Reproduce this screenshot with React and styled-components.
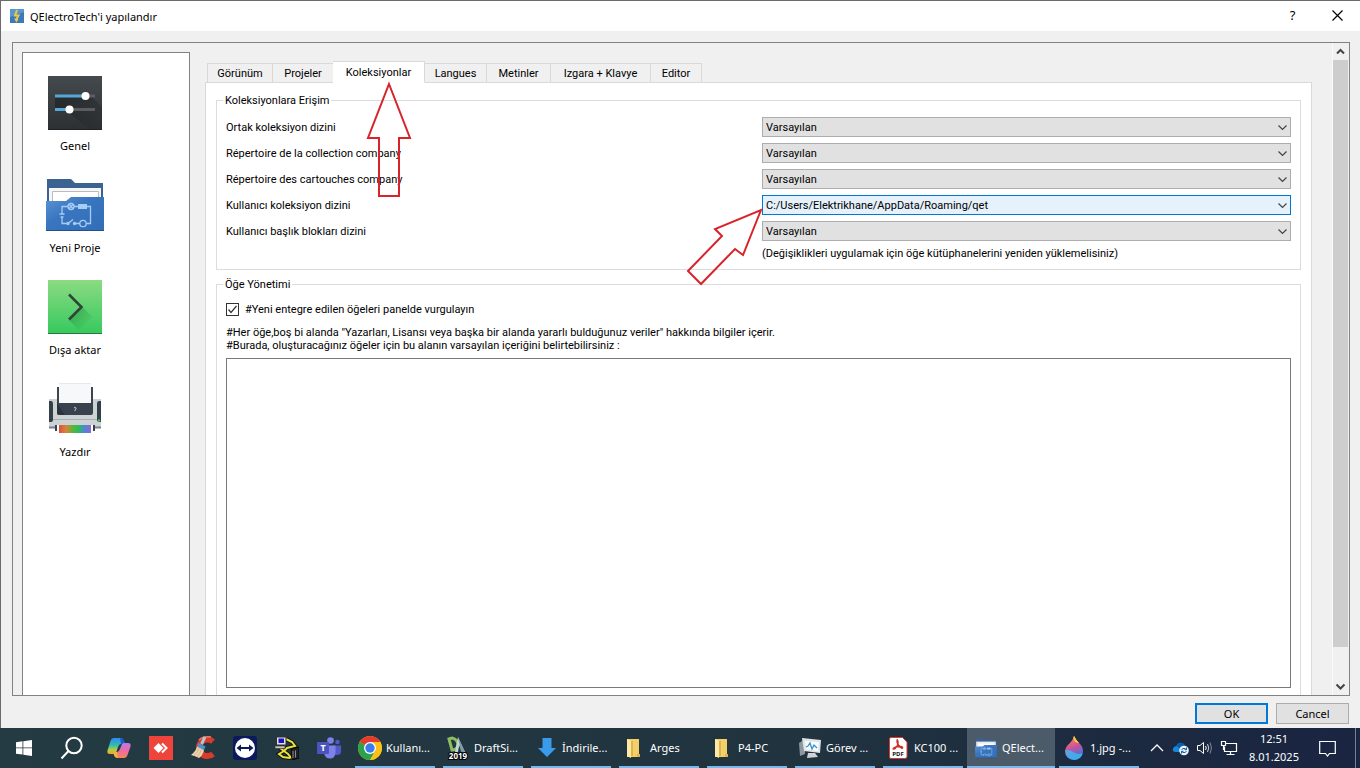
import React, { useState } from "react";
import styled, { createGlobalStyle } from "styled-components";

const GlobalStyle = createGlobalStyle`
    * {
        box-sizing: border-box;
    }
    body {
        margin: 0;
        font-family: "Noto Sans", "Open Sans", sans-serif;
        font-size: 11px;
        line-height: 13px;
        color: #000;
    }
    button, select, textarea, input {
        font: inherit;
        color: inherit;
        margin: 0;
    }
`
const Desktop = styled.div`
    position: relative;
    display: flex;
    flex-direction: column;
    height: 100vh;
    overflow: hidden;
`
const Window = styled.main`
    flex: 1;
    min-height: 0;
    display: flex;
    flex-direction: column;
    background: #f0f0f0;
    border-top: 1px solid #6b6b6b;
    border-left: 1px solid #6b6b6b;
`
const TitleBar = styled.header`
    display: flex;
    align-items: center;
    height: 30px;
    padding-left: 9px;
    background: #fff;
`
const Title = styled.h1`
    flex: 1;
    margin: 0 0 0 6px;
    font-size: 11px;
    font-weight: 400;
`
const TitleButton = styled.button`
    display: flex;
    align-items: center;
    justify-content: center;
    width: 45px;
    height: 30px;
    padding: 0 0 2px;
    border: 0;
    background: none;
    font-size: 13px;
`
const Viewport = styled.div`
    flex: 1;
    min-height: 0;
    display: flex;
    margin: 11px 10px 0 11px;
    border: 1px solid #828282;
`
const Sidebar = styled.nav`
    width: 168px;
    margin: 9px 0 0 9px;
    padding-top: 18px;
    background: #fff;
    border: 1px solid #828282;
    border-bottom: 0;
`
const SidebarItem = styled.button`
    display: flex;
    flex-direction: column;
    align-items: center;
    width: 104px;
    height: 102px;
    padding: 0;
    border: 0;
    background: none;
    line-height: 22px;
`
const Content = styled.div`
    flex: 1;
    min-width: 0;
    display: flex;
    flex-direction: column;
    padding: 18px 20px 0 15px;
    font-family: Roboto, "Noto Sans", sans-serif;
`
const Tabs = styled.div`
    display: flex;
    align-items: flex-end;
    height: 22px;
    padding-left: 2px;
    margin-bottom: -1px;
    z-index: 1;
`
const Tab = styled.button`
    width: ${props => props.$width}px;
    height: ${props => props.$active ? 22 : 20}px;
    margin-left: ${props => props.$active ? -1 : 0}px;
    padding: 0;
    background: ${props => props.$active ? "#fff" : "#f0f0f0"};
    border: 1px solid #d9d9d9;
    border-bottom-color: ${props => props.$active ? "#fff" : "#d9d9d9"};
    & + & {
        border-left-width: ${props => props.$active ? 1 : 0}px;
    }
`
const Page = styled.section`
    flex: 1;
    min-height: 0;
    display: flex;
    flex-direction: column;
    gap: 8px;
    padding: 11px 10px 0;
    background: #fff;
    border: 1px solid #d9d9d9;
    border-bottom: 0;
`
const Group = styled.fieldset`
    min-width: 0;
    margin: 0;
    padding: 0 6px;
    border: 1px solid #dcdcdc;
    ${props => props.$grow && `
        flex: 1;
        min-height: 0;
        border-bottom: 0;
    `}
`
const Legend = styled.legend`
    padding: 0 2px;
`
const Form = styled.div`
    display: grid;
    grid-template-columns: 1fr 1fr;
    gap: 6px 7px;
    align-items: center;
    padding: 10px 3px 9px;
`
const Hint = styled.span`
    grid-column: 2;
`
const SelectBox = styled.div`
    position: relative;
    display: flex;
    height: 20px;
    svg {
        position: absolute;
        right: 3px;
        top: 5px;
        pointer-events: none;
    }
`
const Select = styled.select`
    flex: 1;
    appearance: none;
    padding: 0 20px 0 3px;
    border: 1px solid ${props => props.$hot ? "#0078d7" : "#adadad"};
    border-radius: 0;
    background: ${props => props.$hot ? "#e5f1fb" : "#e1e1e1"};
`
const Column = styled.div`
    display: flex;
    flex-direction: column;
    height: 100%;
    padding: 12px 3px 7px;
`
const CheckLabel = styled.label`
    display: flex;
    align-items: center;
    gap: 6px;
`
const Checkbox = styled.input`
    appearance: none;
    width: 13px;
    height: 13px;
    border: 1px solid #333;
    background: #fff;
`
const CheckBoxWrap = styled.span`
    position: relative;
    display: flex;
    svg {
        position: absolute;
        left: 0;
        top: 0;
        pointer-events: none;
    }
`
const AreaLabel = styled.label`
    margin: 10px 0 6px;
`
const TextArea = styled.textarea`
    flex: 1;
    resize: none;
    border: 1px solid #7a7a7a;
    border-radius: 0;
    background: #fff;
    outline: none;
`
const ScrollBar = styled.div`
    display: flex;
    flex-direction: column;
    width: 17px;
    padding-right: 1px;
    border-left: 1px solid #fafafa;
`
const ScrollButton = styled.button`
    display: flex;
    align-items: center;
    justify-content: center;
    height: 17px;
    padding: 0;
    border: 0;
    background: none;
`
const ScrollTrack = styled.div`
    flex: 1;
    display: flex;
`
const ScrollThumb = styled.div`
    flex: 1;
    height: 95%;
    background: #cdcdcd;
`
const Footer = styled.footer`
    display: flex;
    justify-content: flex-end;
    gap: 8px;
    padding: 7px 11px 4px;
`
const DialogButton = styled.button`
    width: 73px;
    height: 21px;
    padding: 0;
    border: ${props => props.$primary ? "2px solid #0078d7" : "1px solid #adadad"};
    background: #e1e1e1;
`
const TaskBar = styled.footer`
    display: flex;
    height: 40px;
    color: #fff;
    background: linear-gradient(90deg, #243b43 0%, #20333f 60%, #1c2a40 82%, #1a2542 100%);
`
const Launcher = styled.button`
    display: flex;
    align-items: center;
    justify-content: center;
    width: ${props => props.$wide ? 48 : 42}px;
    padding: 0;
    border: 0;
    background: none;
`
const Launchers = styled.div`
    display: flex;
    padding: 0 1px 0 2px;
`
const Tasks = styled.div`
    display: flex;
`
const Task = styled.button`
    display: flex;
    align-items: center;
    gap: 4px;
    width: 88px;
    padding: 0 0 1px 7px;
    border: 0;
    white-space: nowrap;
    background:
        linear-gradient(#76b9ed, #76b9ed) bottom / ${props => props.$active ? "100%" : "80px"} 2px no-repeat,
        ${props => props.$active ? "#4b5b69" : "transparent"};
`
const Tray = styled.div`
    display: flex;
    align-items: center;
    margin-left: auto;
`
const TrayButton = styled.button`
    display: flex;
    align-items: center;
    justify-content: center;
    width: 24px;
    height: 40px;
    padding: 0;
    border: 0;
    background: none;
`
const Clock = styled.time`
    width: 66px;
    line-height: 18px;
    text-align: center;
`
const Notifications = styled(TrayButton)`
    width: 40px;
`
const ShowDesktop = styled(TrayButton)`
    width: 5px;
    margin-left: 8px;
    border-left: 1px solid #76808f;
`
const Markers = styled.svg`
    position: absolute;
    left: 0;
    top: 0;
    pointer-events: none;
    z-index: 2;
`

const Chevron = ({ flip, bold }) => (
    <svg width="11" height="11" viewBox="0 0 11 11">
        <path d={flip ? "M2 7.5L5.5 4L9 7.5" : "M1.5 3.5L5.5 7.5L9.5 3.5"} fill="none" stroke="#444" strokeWidth={bold ? 2 : 1.2} />
    </svg>
)

const AppLogo = () => (
    <svg width="14" height="14" viewBox="0 0 14 14">
        <rect width="14" height="14" fill="#5a95d4" />
        <path d="M0 14V8L14 3V14Z" fill="#3d78ba" />
        <path d="M7 1L5 6.500H8.500L6 11" fill="none" stroke="#e8cb45" strokeWidth="2" />
        <path d="M4 9.500L6.500 13.500L8.500 10Z" fill="#e8cb45" />
    </svg>
)

const SettingsIcon = () => (
    <svg width="64" height="64" viewBox="0 0 64 64">
        <defs>
            <linearGradient id="dark" x1="0" y1="0" x2="0" y2="1">
                <stop offset="0" stopColor="#454a4e" />
                <stop offset="1" stopColor="#2c3033" />
            </linearGradient>
            <linearGradient id="darkShade" x1="0" y1="0" x2="1" y2="1">
                <stop offset=".2" stopColor="#16181a" stopOpacity=".5" />
                <stop offset="1" stopColor="#16181a" stopOpacity="0" />
            </linearGradient>
        </defs>
        <rect x="5" y="5" width="54" height="54" fill="url(#dark)" />
        <path d="M45 22L59 36V59H48L24 41L12 39V26L42 26Z" fill="url(#darkShade)" />
        <path d="M42 25H52M27 38.500H52" stroke="#5b5c60" strokeWidth="3" />
        <path d="M12 25H42M12 38.500H26" stroke="#54a8d8" strokeWidth="3" />
        <circle cx="42.500" cy="25" r="4" fill="#fff" />
        <circle cx="26.500" cy="38.500" r="4" fill="#fff" />
        <path d="M5 58.500H59" stroke="#1f2123" />
    </svg>
)

const ProjectIcon = ({ size = 64 }) => (
    <svg width={size} height={size} viewBox="0 0 64 64">
        <defs>
            <linearGradient id="folder" x1="0" y1="0" x2="1" y2="1">
                <stop offset="0" stopColor="#5b94d6" />
                <stop offset=".4" stopColor="#3a76bf" />
                <stop offset="1" stopColor="#326db8" />
            </linearGradient>
        </defs>
        <path d="M4 6H28L32 10H60V34H4Z" fill="#3c6291" />
        <path d="M6 15H58V36H6Z" fill="#f6f6f6" />
        <path d="M9.500 34V18.500H55.500V34" fill="#fff" stroke="#bcbcbc" />
        <path d="M3 28H23L28 24H61V58H3Z" fill="url(#folder)" />
        <path d="M3 57.500H61" stroke="#234f8c" />
        <g fill="none" stroke="#a5cdf5" strokeWidth="1.300">
            <path d="M19 41V33.500H25M31 33.500H35M44 33.500H47.500V50.500H43M19 44V50.500H24M16.500 41H21.500M17.500 44H20.500" />
            <circle cx="28" cy="33.500" r="3" />
            <path d="M26 31.500L30 35.500M30 31.500L26 35.500" />
            <circle cx="40" cy="50.500" r="3.200" />
            <path d="M25 50.500L30 46.500M31 50.500H37" />
            <circle cx="25" cy="50.500" r="1" />
            <circle cx="31.500" cy="50.500" r="1" />
        </g>
        <rect x="35" y="31" width="9" height="5" fill="#a5cdf5" />
    </svg>
)

const ExportIcon = () => (
    <svg width="64" height="64" viewBox="0 0 64 64">
        <defs>
            <linearGradient id="green" x1="0" y1="0" x2="0" y2="1">
                <stop offset="0" stopColor="#8bdb82" />
                <stop offset="1" stopColor="#36c95e" />
            </linearGradient>
            <linearGradient id="greenShade" x1="0" y1="0" x2="1" y2="1">
                <stop offset=".2" stopColor="#1f8a3c" stopOpacity=".5" />
                <stop offset=".8" stopColor="#1f8a3c" stopOpacity="0" />
            </linearGradient>
        </defs>
        <rect x="5" y="5" width="54" height="54" fill="url(#green)" />
        <path d="M39 32L26 45L36 55L50 42Z" fill="url(#greenShade)" />
        <path d="M26 19.500L38.500 32L26 44.500" fill="none" stroke="#2f4439" strokeWidth="2.500" />
        <path d="M5 58.500H59" stroke="#267a3c" />
    </svg>
)

const PrintIcon = () => (
    <svg width="64" height="64" viewBox="0 0 64 64">
        <defs>
            <linearGradient id="rainbow">
                <stop offset="0" stopColor="#d9503c" />
                <stop offset=".22" stopColor="#d9853a" />
                <stop offset=".45" stopColor="#4fb83c" />
                <stop offset=".62" stopColor="#2fb95a" />
                <stop offset=".8" stopColor="#4a86d8" />
                <stop offset="1" stopColor="#9168cc" />
            </linearGradient>
        </defs>
        <rect x="14" y="10" width="36" height="20" fill="#3a4550" />
        <path d="M6 22H14V26H50V22H58V50H6Z" fill="#cdd3d4" />
        <rect x="16" y="6" width="32" height="22" fill="#f7f8f9" />
        <path d="M16 6.500H48" stroke="#e6e8e9" />
        <path d="M6 24H8Q10 24 10 27V43Q10 45 7 45H6ZM58 24H56Q54 24 54 27V43Q54 45 57 45H58Z" fill="#353f49" />
        <path d="M14 26H50V36Q50 38 48 38H16Q14 38 14 36Z" fill="#37424e" />
        <path d="M14 26L22 38H16Q14 38 14 36Z" fill="#222c36" opacity=".6" />
        <path d="M31 31C33 29 34 32 31.500 34" fill="none" stroke="#c5cdd2" />
        <circle cx="56" cy="43.500" r="1.200" fill="#3ad25c" />
        <path d="M10 42.500H54" stroke="#a7afb2" />
        <path d="M6 50.500H14M50 50.500H58" stroke="#77838c" strokeWidth="2" />
        <path d="M13 48V54M51 48V54" stroke="#37424e" strokeWidth="2" />
        <rect x="14" y="48" width="36" height="8" fill="#fff" />
        <rect x="16" y="48" width="32" height="8" fill="url(#rainbow)" />
    </svg>
)

const StartIcon = () => (
    <svg width="16" height="16" viewBox="0 0 16 16" fill="#fff">
        <path d="M0 2.200L6.500 1.300V7.500H0ZM7.300 1.200L16 0V7.500H7.300ZM0 8.300H6.500V14.600L0 13.700ZM7.300 8.300H16V16L7.300 14.700Z" />
    </svg>
)

const SearchIcon = () => (
    <svg width="24" height="24" viewBox="0 0 24 24" fill="none" stroke="#fff" strokeWidth="2">
        <circle cx="14" cy="9.500" r="7.700" />
        <path d="M8.500 15L1.500 22.500" />
    </svg>
)

const CopilotIcon = () => (
    <svg width="24" height="24" viewBox="0 0 24 24">
        <defs>
            <linearGradient id="copA" x1="0" y1="0" x2="0" y2="1">
                <stop offset="0" stopColor="#2a8df0" />
                <stop offset=".45" stopColor="#35b9b0" />
                <stop offset=".75" stopColor="#b6cf3e" />
                <stop offset="1" stopColor="#f0a928" />
            </linearGradient>
            <linearGradient id="copB" x1="0" y1="0" x2="0" y2="1">
                <stop offset="0" stopColor="#b57bea" />
                <stop offset=".5" stopColor="#ee6aa6" />
                <stop offset="1" stopColor="#f48a52" />
            </linearGradient>
        </defs>
        <path d="M7 2H14Q16 2 17 5L18 8H14Q12 8 11 11L9 17Q8 18 6 18H3Q-1 18 1 13L3.500 5Q4.500 2 7 2Z" fill="url(#copA)" />
        <path d="M13 2Q16 2 17 5L18 8H14Z" fill="#1d5bd0" />
        <path d="M17 22H10Q8 22 7 19L6 16H10Q12 16 13 13L15 8Q16 7 18 7H21Q25 7 23 12L20.500 19Q19.500 22 17 22Z" fill="url(#copB)" />
        <path d="M11 22Q8 22 7 19L6 16H10Z" fill="#f4b13c" />
    </svg>
)

const AnyDeskIcon = () => (
    <svg width="24" height="24" viewBox="0 0 24 24">
        <rect width="24" height="24" fill="#ef443b" />
        <path d="M4.500 12L9.500 7L14.500 12L9.500 17Z" fill="#fff" />
        <path d="M13 7.500L17.500 12L13 16.500" fill="none" stroke="#fff" strokeWidth="2" />
    </svg>
)

const CleanerIcon = () => (
    <svg width="24" height="24" viewBox="0 0 24 24">
        <path d="M22 5.500Q19 3 15 3.500Q8 5 8 12Q9 19 15 20Q19 20.500 22 18" fill="none" stroke="#d83a2c" strokeWidth="6" />
        <path d="M8 4Q12 0 20 1" fill="none" stroke="#ef7b62" strokeWidth="1.500" />
        <path d="M14 1L10.500 8" stroke="#b9c3cb" strokeWidth="3" />
        <path d="M7.500 7L14.500 10.500L13 14L6 10.500Z" fill="#4a93d0" />
        <path d="M6 10.500L13 14Q12 19 8 22Q4 20 0 19Q5 15 6 10.500Z" fill="#ecd3ab" />
        <path d="M8 12Q7 17 3 19.500M10.500 13Q9 18 6 21" fill="none" stroke="#c9a878" strokeWidth=".7" />
    </svg>
)

const TeamViewerIcon = () => (
    <svg width="24" height="24" viewBox="0 0 24 24">
        <rect width="24" height="24" rx="3" fill="#0b1a5c" />
        <circle cx="12" cy="12" r="10" fill="#fff" />
        <path d="M3.500 12L8 8.500V11H16V8.500L20.500 12L16 15.500V13H8V15.500Z" fill="#0b1a5c" />
    </svg>
)

const CableIcon = () => (
    <svg width="24" height="24" viewBox="0 0 24 24">
        <path d="M11 3L17 6L20 10L12 12L9 15L13 18L17 23M5 12L9 15L4 18L8 21L15 22" fill="none" stroke="#111" strokeWidth="4" />
        <path d="M11 3L17 6L20 10L12 12L9 15L13 18L17 23M5 12L9 15L4 18L8 21L15 22" fill="none" stroke="#e8e23a" strokeWidth="2" />
        <path d="M1.500 1H11V9H1.500Z" fill="#e2e2e2" stroke="#333" />
        <rect x="3.500" y="2.500" width="5.500" height="4.500" fill="#1616c8" />
        <path d="M0 10H10V12.500H0Z" fill="#c8c8c8" stroke="#333" strokeWidth=".7" />
        <path d="M16 13L24 11V22L17 24Z" fill="#222" stroke="#050505" />
        <path d="M18 15V22M20.500 14.500V21.500" stroke="#8a8a8a" />
    </svg>
)

const TeamsIcon = () => (
    <svg width="24" height="24" viewBox="0 0 24 24">
        <circle cx="20.500" cy="6" r="2.300" fill="#5059c9" />
        <path d="M16 9.500H24V15.500Q24 19 20 19Q16 19 16 15.500Z" fill="#5059c9" />
        <circle cx="13.500" cy="4.500" r="3.300" fill="#7b83eb" />
        <path d="M7 9.500H18.500V17Q18 22.500 13 22.500Q8 22.500 7 17Z" fill="#7b83eb" />
        <rect y="6" width="12" height="12" rx="1" fill="#4b53bc" />
        <text x="6" y="15" fontSize="9" fontWeight="700" textAnchor="middle" fill="#fff">T</text>
    </svg>
)

const ChromeIcon = () => (
    <svg width="24" height="24" viewBox="0 0 24 24">
        <circle cx="12" cy="12" r="12" fill="#fbc116" />
        <path d="M12 12L1.610 6A12 12 0 0 1 22.390 6Z" fill="#e33b2e" />
        <path d="M12 12L1.610 6A12 12 0 0 0 12 24L17.200 15Z" fill="#2ba24c" />
        <path d="M12 6H22.390A12 12 0 0 1 12 24L17.200 15Z" fill="#fbc116" />
        <circle cx="12" cy="12" r="6" fill="#fff" />
        <circle cx="12" cy="12" r="4.700" fill="#3a7bee" />
    </svg>
)

const DraftIcon = () => (
    <svg width="24" height="24" viewBox="0 0 24 24">
        <path d="M3 3L6 2Q11 3 12 8Q12 13 7 14L6 14Z" fill="none" stroke="#8ebd5e" strokeWidth="3" />
        <path d="M9 16L12 1L19 16H16L13 9L12 16Z" fill="#c4d8da" />
        <path d="M12 1L19 16H15Z" fill="#7d9ba3" />
        <text x="12" y="23" fontSize="8" fontWeight="700" textAnchor="middle" fill="#fff" stroke="#000" strokeWidth="2" paintOrder="stroke">2019</text>
    </svg>
)

const DownloadIcon = () => (
    <svg width="24" height="24" viewBox="0 0 24 24">
        <path d="M8.500 2H17.500V12H22L13 21L4 12H8.500Z" fill="#3a9bea" />
    </svg>
)

const FolderIcon = () => (
    <svg width="24" height="24" viewBox="0 0 24 24">
        <path d="M5 3H17V21H5Z" fill="#f3cf6b" />
        <path d="M5 3L9 5V22L5 20Z" fill="#ffe9a4" />
        <path d="M9 5H11V20H9ZM15 18H18V21H15Z" fill="#dfb346" />
    </svg>
)

const TaskManagerIcon = () => (
    <svg width="24" height="24" viewBox="0 0 24 24">
        <path d="M1 7L7 3V18L2 20Z" fill="#8d979c" />
        <path d="M4 2L23 4L22 17L6 15Z" fill="#dfe4e6" />
        <path d="M7 5L21 6L20 15L8 13.500Z" fill="#f6fbff" />
        <path d="M8 11L10 10L12 7L14 13L16 9L19 12" fill="none" stroke="#3f8fc4" strokeWidth="1.300" />
        <path d="M10 17L17 17L20 21L9 22Z" fill="#cdd3d6" />
    </svg>
)

const PdfIcon = () => (
    <svg width="24" height="24" viewBox="0 0 24 24">
        <path d="M5 1.500H16.500L21 6V20.500Q21 22.500 19 22.500H5Q3.500 22.500 3.500 21V3Q3.500 1.500 5 1.500Z" fill="#fff" stroke="#d63c32" />
        <path d="M11.500 4Q13 7 11 10Q9 14 7 13Q8 10.500 14 10.500Q18 11 16 12.500Q12 10 11 6Q11 3 11.500 4" fill="none" stroke="#d52b22" strokeWidth="1.300" />
        <text x="12" y="20" fontSize="6" fontWeight="700" textAnchor="middle" fill="#111">PDF</text>
    </svg>
)

const PaintIcon = () => (
    <svg width="24" height="24" viewBox="0 0 24 24">
        <defs>
            <linearGradient id="drop" x1="0" y1="0" x2=".3" y2="1">
                <stop offset=".1" stopColor="#f7c646" />
                <stop offset=".3" stopColor="#ee6a72" />
                <stop offset=".6" stopColor="#c052a5" />
                <stop offset="1" stopColor="#2f7fe0" />
            </linearGradient>
        </defs>
        <path d="M12 0Q14 4 18 8Q21 11 21 15.500A9 8.500 0 0 1 3 15.500Q3 11 8 7Q11 4 12 0Z" fill="url(#drop)" />
        <path d="M11.500 1.500L12 0Q14 4 17 7Q12 7 11.500 1.500Z" fill="#f9cf3c" />
        <path d="M3.200 14Q8 13 12 16.500Q16 19 20.500 17Q19 24 12 24Q3 23 3.200 14Z" fill="#46b5ee" opacity=".8" />
    </svg>
)

const CloudIcon = () => (
    <svg width="18" height="16" viewBox="0 0 18 16">
        <path d="M4 12Q0 12 1 8.500Q2 6 4.500 6Q6 2 10 3Q12.500 4 13 6Q16 6.500 16 9L14 12Z" fill="#1886da" />
        <path d="M4.500 6Q6 2 10 3Q12.500 4 13 6L8 9Z" fill="#0c5fae" />
        <circle cx="12" cy="10.500" r="4.800" fill="#eaf3fb" />
        <path d="M9.500 9.500Q12 7 14.500 9.500M14.500 11.500Q12 14 9.500 11.500M14.500 7.500V9.700H12.500M9.500 13.500V11.300H11.500" fill="none" stroke="#0c5fae" />
    </svg>
)

const VolumeIcon = () => (
    <svg width="18" height="16" viewBox="0 0 18 16" fill="none" stroke="#fff">
        <path d="M1.500 5.500H4L7.500 2.500V13.500L4 10.500H1.500Z" />
        <path d="M9.500 6Q11 8 9.500 10" />
        <path d="M11.500 4Q14 8 11.500 12" opacity=".8" />
        <path d="M14 2.500Q17 8 14 13.500" opacity=".45" />
    </svg>
)

const NetworkIcon = () => (
    <svg width="18" height="16" viewBox="0 0 18 16" fill="none" stroke="#fff" strokeWidth="1.200">
        <path d="M5.500 3.500H16.500V11.500H4.500V6.500M10.500 11.500V14M6.500 14.500H14.500" />
        <path d="M1.500 1.500H5.500V5.500H1.500ZM3.500 5.500V10" />
    </svg>
)

const sections = [
    { name: "Genel", icon: <SettingsIcon /> },
    { name: "Yeni Proje", icon: <ProjectIcon /> },
    { name: "Dışa aktar", icon: <ExportIcon /> },
    { name: "Yazdır", icon: <PrintIcon /> }
]

const tabs = [
    { name: "Görünüm", width: 66 },
    { name: "Projeler", width: 61 },
    { name: "Koleksiyonlar", width: 92 },
    { name: "Langues", width: 62 },
    { name: "Metinler", width: 64 },
    { name: "Izgara + Klavye", width: 100 },
    { name: "Editor", width: 51 }
]

const folders = [
    { id: "common", label: "Ortak koleksiyon dizini", value: "Varsayılan" },
    { id: "company", label: "Répertoire de la collection company", value: "Varsayılan" },
    { id: "companyTb", label: "Répertoire des cartouches company", value: "Varsayılan" },
    { id: "user", label: "Kullanıcı koleksiyon dizini", value: "C:/Users/Elektrikhane/AppData/Roaming/qet", hot: true },
    { id: "userTb", label: "Kullanıcı başlık blokları dizini", value: "Varsayılan" }
]

const launchers = [
    { name: "Copilot", icon: <CopilotIcon /> },
    { name: "AnyDesk", icon: <AnyDeskIcon /> },
    { name: "CCleaner", icon: <CleanerIcon /> },
    { name: "TeamViewer", icon: <TeamViewerIcon /> },
    { name: "PLC", icon: <CableIcon /> },
    { name: "Teams", icon: <TeamsIcon /> }
]

const tasks = [
    { name: "Kullanı...", icon: <ChromeIcon /> },
    { name: "DraftSi...", icon: <DraftIcon /> },
    { name: "İndirile...", icon: <DownloadIcon /> },
    { name: "Arges", icon: <FolderIcon /> },
    { name: "P4-PC", icon: <FolderIcon /> },
    { name: "Görev ...", icon: <TaskManagerIcon /> },
    { name: "KC100 ...", icon: <PdfIcon /> },
    { name: "QElect...", icon: <ProjectIcon size={24} />, active: true },
    { name: "1.jpg -...", icon: <PaintIcon /> }
]

export default function App() {
    const [tab, setTab] = useState("Koleksiyonlar")
    const [highlight, setHighlight] = useState(true)

    return (
        <Desktop>
            <GlobalStyle />
            <Window>
                <TitleBar>
                    <AppLogo />
                    <Title>QElectroTech'i yapılandır</Title>
                    <TitleButton>?</TitleButton>
                    <TitleButton aria-label="Close">
                        <svg width="11" height="11" viewBox="0 0 11 11">
                            <path d="M.5 .5L10.500 10.500M10.500 .5L.5 10.500" stroke="#000" strokeWidth="1.200" />
                        </svg>
                    </TitleButton>
                </TitleBar>
                <Viewport>
                    <Sidebar>
                        {sections.map(section => (
                            <SidebarItem key={section.name}>
                                {section.icon}
                                {section.name}
                            </SidebarItem>
                        ))}
                    </Sidebar>
                    <Content>
                        <Tabs role="tablist">
                            {tabs.map(({ name, width }) => (
                                <Tab
                                    key={name}
                                    role="tab"
                                    aria-selected={tab === name}
                                    $active={tab === name}
                                    $width={width}
                                    onClick={() => setTab(name)}
                                >
                                    {name}
                                </Tab>
                            ))}
                        </Tabs>
                        <Page>
                            <Group>
                                <Legend>Koleksiyonlara Erişim</Legend>
                                <Form>
                                    {folders.map(folder => (
                                        <React.Fragment key={folder.id}>
                                            <label htmlFor={folder.id}>{folder.label}</label>
                                            <SelectBox>
                                                <Select id={folder.id} $hot={folder.hot} defaultValue={folder.value}>
                                                    <option>{folder.value}</option>
                                                </Select>
                                                <Chevron />
                                            </SelectBox>
                                        </React.Fragment>
                                    ))}
                                    <Hint>(Değişiklikleri uygulamak için öğe kütüphanelerini yeniden yüklemelisiniz)</Hint>
                                </Form>
                            </Group>
                            <Group $grow>
                                <Legend>Öğe Yönetimi</Legend>
                                <Column>
                                    <CheckLabel>
                                        <CheckBoxWrap>
                                            <Checkbox
                                                type="checkbox"
                                                checked={highlight}
                                                onChange={e => setHighlight(e.target.checked)}
                                            />
                                            {highlight && (
                                                <svg width="13" height="13" viewBox="0 0 13 13">
                                                    <path d="M2.500 6.500L5 9.500L10.500 3" fill="none" stroke="#333" strokeWidth="1.200" />
                                                </svg>
                                            )}
                                        </CheckBoxWrap>
                                        #Yeni entegre edilen öğeleri panelde vurgulayın
                                    </CheckLabel>
                                    <AreaLabel htmlFor="defaultInfo">
                                        #Her öğe,boş bi alanda "Yazarları, Lisansı veya başka bir alanda yararlı bulduğunuz veriler" hakkında bilgiler içerir.
                                        <br />
                                        #Burada, oluşturacağınız öğeler için bu alanın varsayılan içeriğini belirtebilirsiniz :
                                    </AreaLabel>
                                    <TextArea id="defaultInfo" />
                                </Column>
                            </Group>
                        </Page>
                    </Content>
                    <ScrollBar>
                        <ScrollButton aria-label="Scroll up"><Chevron flip bold /></ScrollButton>
                        <ScrollTrack><ScrollThumb /></ScrollTrack>
                        <ScrollButton aria-label="Scroll down"><Chevron bold /></ScrollButton>
                    </ScrollBar>
                </Viewport>
                <Footer>
                    <DialogButton $primary>OK</DialogButton>
                    <DialogButton>Cancel</DialogButton>
                </Footer>
            </Window>
            <TaskBar>
                <Launcher $wide aria-label="Start"><StartIcon /></Launcher>
                <Launcher $wide aria-label="Search"><SearchIcon /></Launcher>
                <Launchers>
                    {launchers.map(({ name, icon }) => (
                        <Launcher key={name} aria-label={name}>{icon}</Launcher>
                    ))}
                </Launchers>
                <Tasks>
                    {tasks.map(task => (
                        <Task key={task.name} $active={task.active}>
                            {task.icon}
                            {task.name}
                        </Task>
                    ))}
                </Tasks>
                <Tray>
                    <TrayButton aria-label="Hidden icons">
                        <svg width="14" height="8" viewBox="0 0 14 8">
                            <path d="M1 7L7 1L13 7" fill="none" stroke="#fff" strokeWidth="1.300" />
                        </svg>
                    </TrayButton>
                    <TrayButton aria-label="OneDrive"><CloudIcon /></TrayButton>
                    <TrayButton aria-label="Volume"><VolumeIcon /></TrayButton>
                    <TrayButton aria-label="Network"><NetworkIcon /></TrayButton>
                    <Clock>
                        12:51
                        <br />
                        8.01.2025
                    </Clock>
                    <Notifications aria-label="Notifications">
                        <svg width="17" height="17" viewBox="0 0 17 17">
                            <path d="M.7 1.500H16.300V13.500H10.500L8.500 16L6.500 13.500H.7Z" fill="none" stroke="#fff" strokeWidth="1.200" />
                        </svg>
                    </Notifications>
                    <ShowDesktop aria-label="Show desktop" />
                </Tray>
            </TaskBar>
            <Markers width="800" height="300" viewBox="0 0 800 300" fill="none" stroke="#d8232a" strokeWidth="2">
                <path d="M389 84L410 138H399V196H379V138H368Z" />
                <path d="M761 210L743 255L735 249L701 284L688 271L722 236L715 229Z" />
            </Markers>
        </Desktop>
    )
}
